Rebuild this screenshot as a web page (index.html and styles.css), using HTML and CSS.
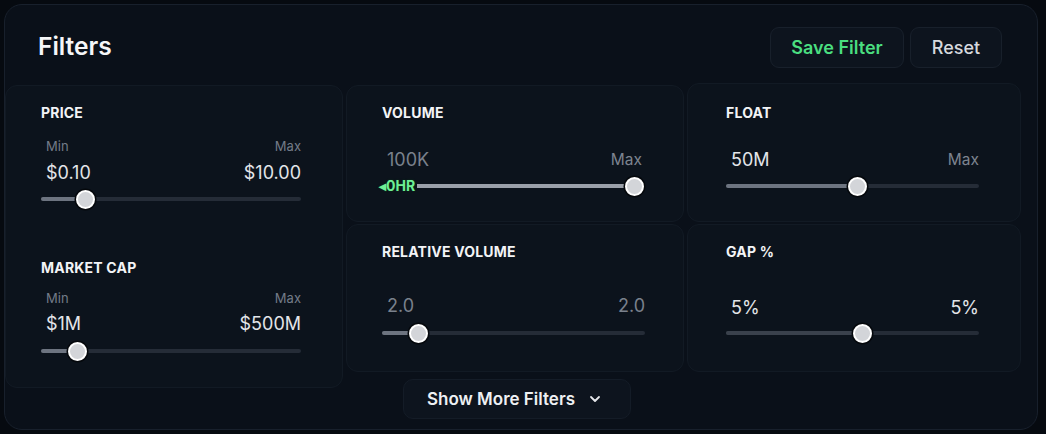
FILE: index.html
```html
<!DOCTYPE html>
<html>
<head>
<meta charset="utf-8">
<link rel="stylesheet" href="styles.css">
</head>
<body>
<div class="panel">
  <div class="header">
    <h1 class="title">Filters</h1>
    <div class="actions">
      <button class="btn btn-save">Save Filter</button>
      <button class="btn btn-reset">Reset</button>
    </div>
  </div>
  <div class="grid">
    <div class="card card-left">
      <div class="section">
        <div class="label">PRICE</div>
        <div class="row minmax"><span>Min</span><span>Max</span></div>
        <div class="row values"><span>$0.10</span><span>$10.00</span></div>
        <div class="slider"><div class="track"><div class="fill" style="width:17%"></div></div><div class="thumb" style="left:17%"></div></div>
      </div>
      <div class="section section-mc">
        <div class="label">MARKET CAP</div>
        <div class="row minmax"><span>Min</span><span>Max</span></div>
        <div class="row values"><span>$1M</span><span>$500M</span></div>
        <div class="slider"><div class="track"><div class="fill" style="width:14%"></div></div><div class="thumb" style="left:14%"></div></div>
      </div>
    </div>
    <div class="card card-vol">
      <div class="label">VOLUME</div>
      <div class="row values values-top muted"><span>100K</span><span class="max-small">Max</span></div>
      <div class="slider"><div class="track"><div class="fill fill-light" style="width:97%"></div></div><div class="thumb" style="left:97%"></div><span class="badge">◂0HR</span></div>
    </div>
    <div class="card card-float">
      <div class="label">FLOAT</div>
      <div class="row values values-top"><span>50M</span><span class="max-small">Max</span></div>
      <div class="slider"><div class="track"><div class="fill" style="width:52%"></div></div><div class="thumb" style="left:52%"></div></div>
    </div>
    <div class="card card-rvol">
      <div class="label">RELATIVE VOLUME</div>
      <div class="row values values-low muted"><span>2.0</span><span>2.0</span></div>
      <div class="slider"><div class="track"><div class="fill" style="width:14%"></div></div><div class="thumb" style="left:14%"></div></div>
    </div>
    <div class="card card-gap">
      <div class="label">GAP %</div>
      <div class="row values values-gap"><span>5%</span><span>5%</span></div>
      <div class="slider"><div class="track"><div class="fill fill-dim" style="width:54%"></div></div><div class="thumb" style="left:54%"></div></div>
    </div>
  </div>
  <div class="more">
    <button class="btn-more">Show More Filters
      <svg class="chev" width="12" height="8" viewBox="0 0 12 8"><path d="M2 2l4 4 4-4" fill="none" stroke="#e5e7eb" stroke-width="1.8" stroke-linecap="round" stroke-linejoin="round"/></svg>
    </button>
  </div>
</div>
</body>
</html>
```
FILE: styles.css
```css
* { box-sizing: border-box; }
html, body { margin: 0; padding: 0; }
body {
  background: #060a10;
  font-family: Inter, "Noto Sans", "Liberation Sans", sans-serif;
  color: #e5e7eb;
  width: 1046px;
  height: 434px;
  overflow: hidden;
}
.panel {
  margin: 4px 0 0 4px;
  width: 1034px;
  height: 426px;
  background: #0a1019;
  border: 1px solid #18202c;
  border-radius: 18px;
}
.header {
  height: 80px;
  display: flex;
  align-items: flex-start;
  justify-content: space-between;
  padding: 0 35px 0 33px;
}
.title {
  margin: 26px 0 0 0;
  font-size: 24.5px;
  line-height: 30px;
  font-weight: 600;
  color: #f5f6f8;
}
.actions {
  margin-top: 22px;
  display: flex;
  gap: 6px;
}
.btn {
  height: 41px;
  border-radius: 9px;
  background: #0d141e;
  border: 1px solid #18202b;
  font-family: inherit;
  font-size: 18px;
  font-weight: 600;
  padding: 0;
}
.btn-save { width: 134px; color: #4ade80; }
.btn-reset { width: 92px; color: #d6d9de; font-weight: 500; }
.grid {
  display: grid;
  grid-template-columns: 338px 338px 334px;
  grid-template-rows: 137px 148px;
  column-gap: 3px;
  row-gap: 2px;
}
.card {
  background: #0c131c;
  border: 1px solid #121a24;
  border-radius: 12px;
  padding: 19px 41px 0 35px;
}
.card-left { grid-column: 1; grid-row: 1 / span 2; height: 303px; align-self: start; }
.card-vol { grid-column: 2; grid-row: 1; }
.card-float { grid-column: 3; grid-row: 1; margin-top: -2px; padding-top: 21px; padding-left: 38px; }
.card-rvol { grid-column: 2; grid-row: 2; padding-right: 38px; }
.card-gap { grid-column: 3; grid-row: 2; padding-left: 38px; }
.label {
  font-size: 14px;
  line-height: 16px;
  font-weight: 700;
  color: #f3f4f6;
  letter-spacing: 0.2px;
}
.row {
  display: flex;
  justify-content: space-between;
  padding: 0 0 0 5px;
}
.minmax {
  margin-top: 17px;
  font-size: 13px;
  line-height: 16px;
  color: #737b88;
}
.values {
  margin-top: 9px;
  font-size: 18px;
  line-height: 20px;
  color: #e3e5e9;
}
.section-mc { margin-top: 52px; }
.section-mc .minmax { margin-top: 14px; }
.section-mc .values { margin-top: 8px; }
.values-top { margin-top: 29px; }
.values-low { margin-top: 36px; }
.values-gap { margin-top: 38px; }
.muted { color: #7a818c; }
.max-small { font-size: 15.5px; color: #7d8490; }
.slider {
  position: relative;
  height: 18px;
  margin-top: 7px;
  display: flex;
  align-items: center;
}
.section-mc .slider, .card-rvol .slider { margin-top: 8px; }
.card-gap .slider { margin-top: 6px; }
.track {
  width: 100%;
  height: 4px;
  border-radius: 2px;
  background: #252c37;
  overflow: hidden;
}
.fill { height: 100%; background: #6d7480; }
.fill-light { background: #9aa0a9; }
.fill-dim { background: #3a414c; }
.thumb {
  position: absolute;
  top: 50%;
  width: 19px;
  height: 19px;
  margin: -9.5px 0 0 -9.5px;
  border-radius: 50%;
  background: #d3d5d9;
  border: 2px solid #ffffff;
  box-shadow: 0 0 0 1.5px #05080c;
}
.badge {
  position: absolute;
  left: -3px;
  top: 50%;
  transform: translateY(-50%);
  font-size: 14px;
  font-weight: 700;
  line-height: 14px;
  color: #6ef095;
  text-shadow: 0 0 2px #0a3a1a;
  background: #0c131c;
  padding-right: 2px;
}
.more {
  display: flex;
  justify-content: flex-start;
  padding-left: 398px;
  margin-top: 7px;
}
.btn-more {
  width: 228px;
  height: 40px;
  background: #0d141e;
  border: 1px solid #141c27;
  border-radius: 10px;
  color: #eef0f3;
  font-family: inherit;
  font-size: 17px;
  font-weight: 600;
  display: flex;
  align-items: center;
  justify-content: center;
  gap: 14px;
  padding: 0 6px 0 0;
}
.chev { display: block; }
```
